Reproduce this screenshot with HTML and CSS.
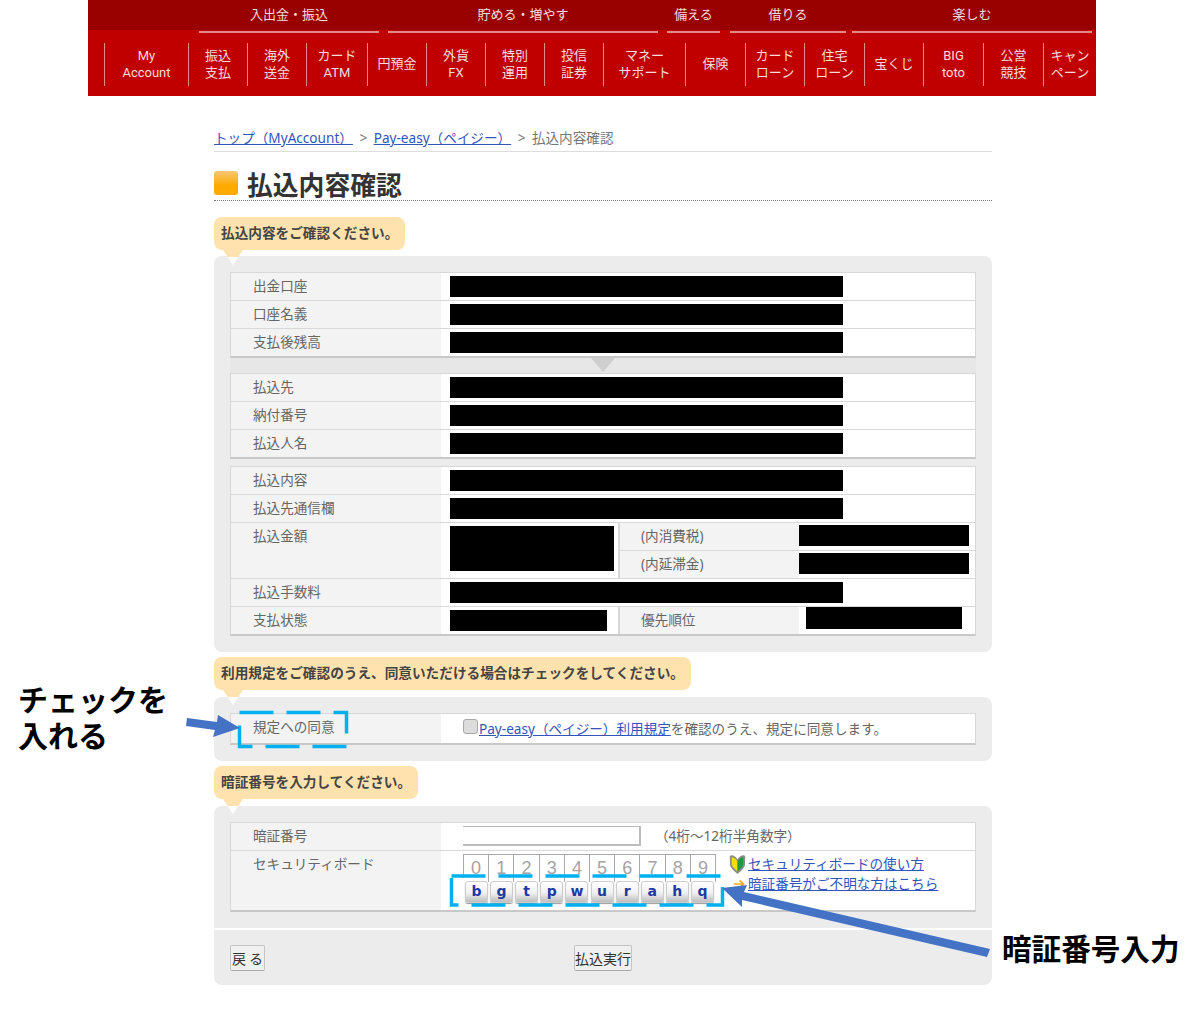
FILE: index.html
```html
<!DOCTYPE html>
<html lang="ja">
<head>
<meta charset="utf-8">
<title>払込内容確認</title>
<link rel="stylesheet" href="styles.css">
</head>
<body>
<header class="site-nav">
  <div class="nav-groups">
    <div class="group g-in">入出金・振込</div>
    <div class="group g-save">貯める・増やす</div>
    <div class="group g-prep">備える</div>
    <div class="group g-loan">借りる</div>
    <div class="group g-fun">楽しむ</div>
  </div>
  <nav class="nav-items">
    <a class="item">My<br>Account</a>
    <a class="item">振込<br>支払</a>
    <a class="item">海外<br>送金</a>
    <a class="item">カード<br>ATM</a>
    <a class="item">円預金</a>
    <a class="item">外貨<br>FX</a>
    <a class="item">特別<br>運用</a>
    <a class="item">投信<br>証券</a>
    <a class="item">マネー<br>サポート</a>
    <a class="item">保険</a>
    <a class="item">カード<br>ローン</a>
    <a class="item">住宅<br>ローン</a>
    <a class="item">宝くじ</a>
    <a class="item">BIG<br>toto</a>
    <a class="item">公営<br>競技</a>
    <a class="item">キャン<br>ペーン</a>
  </nav>
</header>

<main class="main">
  <div class="crumbs"><a class="link">トップ（MyAccount）</a><span class="sep">&gt;</span><a class="link">Pay-easy（ペイジー）</a><span class="sep">&gt;</span><span>払込内容確認</span></div>
  <h1 class="title"><span class="title-mark"></span>払込内容確認</h1>

  <p class="bubble bubble-first">払込内容をご確認ください。</p>
  <section class="panel">
    <div class="tbl">
      <div class="row"><div class="lbl">出金口座</div><div class="val"><i class="ink ink-wide"></i></div></div>
      <div class="row"><div class="lbl">口座名義</div><div class="val"><i class="ink ink-wide"></i></div></div>
      <div class="row row-last"><div class="lbl">支払後残高</div><div class="val"><i class="ink ink-wide"></i></div></div>
    </div>
    <div class="flow"><span class="flow-mark"></span></div>
    <div class="tbl">
      <div class="row"><div class="lbl">払込先</div><div class="val"><i class="ink ink-wide"></i></div></div>
      <div class="row"><div class="lbl">納付番号</div><div class="val"><i class="ink ink-wide"></i></div></div>
      <div class="row row-last"><div class="lbl">払込人名</div><div class="val"><i class="ink ink-wide"></i></div></div>
    </div>
    <div class="tbl tbl-spaced">
      <div class="row"><div class="lbl">払込内容</div><div class="val"><i class="ink ink-wide"></i></div></div>
      <div class="row"><div class="lbl">払込先通信欄</div><div class="val"><i class="ink ink-wide"></i></div></div>
      <div class="row row-split row-tall">
        <div class="lbl lbl-top">払込金額</div>
        <div class="val val-mid"><i class="ink ink-tall"></i></div>
        <div class="sub">
          <div class="sub-row"><div class="lbl lbl-sub">(内消費税)</div><div class="val val-side"><i class="ink ink-side"></i></div></div>
          <div class="sub-row sub-row-last"><div class="lbl lbl-sub">(内延滞金)</div><div class="val val-side"><i class="ink ink-side"></i></div></div>
        </div>
      </div>
      <div class="row"><div class="lbl">払込手数料</div><div class="val"><i class="ink ink-wide"></i></div></div>
      <div class="row row-split row-last">
        <div class="lbl">支払状態</div>
        <div class="val val-mid"><i class="ink ink-status"></i></div>
        <div class="sub-row sub-row-last sub-row-edge"><div class="lbl lbl-sub">優先順位</div><div class="val val-prio"><i class="ink ink-prio"></i></div></div>
      </div>
    </div>
  </section>

  <p class="bubble">利用規定をご確認のうえ、同意いただける場合はチェックをしてください。</p>
  <section class="panel">
    <div class="tbl">
      <div class="row row-last row-consent">
        <div class="lbl">規定への同意</div>
        <div class="val val-form"><input class="check" type="checkbox"><span class="consent"><a class="link">Pay-easy（ペイジー）利用規定</a>を確認のうえ、規定に同意します。</span></div>
      </div>
    </div>
  </section>

  <p class="bubble">暗証番号を入力してください。</p>
  <section class="panel panel-pin">
    <div class="tbl">
      <div class="row">
        <div class="lbl">暗証番号</div>
        <div class="val val-form"><input class="pin" type="text"><span class="hint">（4桁～12桁半角数字）</span></div>
      </div>
      <div class="row row-last row-board">
        <div class="lbl lbl-top">セキュリティボード</div>
        <div class="val val-board">
          <div class="board">
            <div class="digits"><span>0</span><span>1</span><span>2</span><span>3</span><span>4</span><span>5</span><span>6</span><span>7</span><span>8</span><span>9</span></div>
            <div class="keys"><span>b</span><span>g</span><span>t</span><span>p</span><span>w</span><span>u</span><span>r</span><span>a</span><span>h</span><span>q</span></div>
          </div>
          <div class="help">
            <div class="help-line">
              <svg class="help-icon" viewBox="0 0 17 20" aria-hidden="true"><path d="M8.5 5.5 C6 1.5 2.5 .5 .8 2 L1 11 C1.5 14 5 17 8.5 20 C12 17 15.5 14 16 11 L16.2 2 C14.5 .5 11 1.5 8.5 5.5Z" fill="#8c8c8c"/><path d="M8.5 7.5 C6.5 4 4 3 2.6 3.6 L2.8 10.6 C3.2 13 6 15.5 8.5 17.5Z" fill="#f4e000"/><path d="M8.5 7.5 C10.5 4 13 3 14.4 3.6 L14.2 10.6 C13.8 13 11 15.5 8.5 17.5Z" fill="#1f9a3c"/></svg>
              <a class="link">セキュリティボードの使い方</a>
            </div>
            <div class="help-line">
              <svg class="help-icon help-arrow" viewBox="0 0 17 12" aria-hidden="true"><path d="M2 6H14M9 1.5L14 6L9 10.5" fill="none" stroke="#f5a623" stroke-width="2"/></svg>
              <a class="link">暗証番号がご不明な方はこちら</a>
            </div>
          </div>
        </div>
      </div>
    </div>
    <div class="actions">
      <button class="btn btn-back" type="button">戻 る</button>
      <button class="btn" type="button">払込実行</button>
    </div>
  </section>
</main>

<div class="notes">
  <svg class="notes-art" viewBox="0 0 1200 1013" aria-hidden="true">
    <rect class="dash" x="239.5" y="712.5" width="107" height="34"/>
    <rect class="dash" x="451.5" y="876" width="271" height="29"/>
    <polygon class="arrow" points="187,718 217,722 218,715 240,728 213,737 215,730 186,726"/>
    <polygon class="arrow" points="722,888 747,885 744,892 990,949 987,957 742,900 742,907"/>
  </svg>
  <div class="note note-check">チェックを<br>入れる</div>
  <div class="note note-pin">暗証番号入力</div>
</div>
</body>
</html>
```

FILE: styles.css
```css
* { box-sizing: border-box; }
html, body { margin: 0; padding: 0; }
body {
  position: relative;
  height: 1013px;
  overflow: hidden;
  background: #fff;
  color: #666;
  font-family: "Noto Sans", "Noto Sans CJK JP", sans-serif;
  font-size: 13.6px;
  line-height: 20px;
}

/* navigation */
.site-nav {
  width: 1008px;
  height: 96px;
  margin-left: 88px;
  background: #c00000;
  color: #f6dcdc;
  font-family: Roboto, "Noto Sans CJK JP", sans-serif;
}
.nav-groups {
  display: flex;
  height: 33px;
  padding-left: 111px;
  background: linear-gradient(#990000 30px, #c00000 30px);
}
.group {
  height: 33px;
  border-bottom: 2px solid #e08a8a;
  text-align: center;
  font-size: 13px;
  line-height: 29px;
}
.g-in { width: 180px; margin-right: 9px; }
.g-save { width: 270px; margin-right: 9px; }
.g-prep { width: 53px; margin-right: 10px; }
.g-loan { width: 116px; margin-right: 6px; }
.g-fun { width: 240px; }
.nav-items {
  display: grid;
  grid-template-columns: 84px 59px 59px 61px 59px 59px 59px 59px 82px 60px 59px 60px 59px 60px 60px 53px;
  height: 43px;
  margin: 10px 0 0 16px;
}
.item {
  display: flex;
  align-items: center;
  justify-content: center;
  padding-bottom: 2px;
  border-left: 1px solid #e08a8a;
  text-align: center;
  font-size: 13px;
  line-height: 17px;
  white-space: nowrap;
}

/* page */
.main { width: 778px; margin-left: 214px; }
.crumbs {
  height: 56px;
  padding-top: 32px;
  border-bottom: 1px solid #ddd;
  color: #777;
}
.sep { margin: 0 6.5px; }
.link { color: #3355bb; text-decoration: underline; }
.title {
  display: flex;
  align-items: center;
  height: 49px;
  margin: 0;
  padding-top: 17px;
  border-bottom: 1px dotted #777;
  color: #333;
  font-size: 25.8px;
  line-height: 34px;
  font-weight: 700;
}
.title-mark {
  width: 24px;
  height: 24px;
  margin: 0 9px 4px 0;
  border-radius: 3px;
  background: linear-gradient(#f6c778, #ffaa00 60%);
}
.bubble {
  position: relative;
  width: fit-content;
  height: 33px;
  margin: 5px 0 7px;
  padding: 0 7px;
  border-radius: 8px;
  background: #ffe2ad;
  color: #444;
  font-size: 13.65px;
  font-weight: 700;
  line-height: 32px;
}
.bubble-first { margin: 16px 0 6px; }
.bubble::after {
  content: "";
  position: absolute;
  left: 9px;
  top: 33px;
  width: 20px;
  height: 15px;
  background: linear-gradient(#ffe2ad 7px, #fff 7px);
  clip-path: polygon(0 0, 100% 0, 50% 100%);
  z-index: 1;
}
.panel {
  padding: 16px;
  border-radius: 8px;
  background: #ececec;
}
.panel-pin { padding-bottom: 0; }

/* tables */
.tbl {
  border-top: 1px solid #d8d8d8;
  border-left: 1px solid #d8d8d8;
  border-right: 1px solid #d8d8d8;
  border-bottom: 2px solid #c8c8c8;
  background: #fff;
}
.tbl-spaced { margin-top: 7px; }
.flow {
  display: flex;
  justify-content: center;
  height: 15px;
  background: #e7e7e7;
}
.flow-mark {
  width: 24px;
  height: 14px;
  background: #cfcfcf;
  clip-path: polygon(0 0, 100% 0, 50% 100%);
}
.row {
  display: grid;
  grid-template-columns: 210px 1fr;
  height: 28px;
  border-bottom: 1px solid #d8d8d8;
}
.row-last { height: 27px; border-bottom: 0; }
.row-tall { height: 56px; }
.row-split { grid-template-columns: 210px 177px 1fr; }
.row-consent { height: 29px; }
.row-consent .lbl { padding-bottom: 4px; }
.row-board { height: 59px; }
.lbl {
  display: flex;
  align-items: center;
  padding: 0 0 2px 22px;
  background: #f3f3f3;
}
.lbl-top { align-items: flex-start; padding-top: 3px; }
.val {
  display: flex;
  align-items: center;
  padding-left: 9px;
  min-width: 0;
}
.ink { display: block; background: #000; height: 21px; }
.ink-wide { width: 393px; }
.ink-tall { width: 164px; height: 45px; margin-bottom: 4px; }
.ink-side { width: 170px; margin-bottom: 2px; }
.ink-status { width: 157px; }
.ink-prio { width: 156px; height: 22px; }
.sub { display: flex; flex-direction: column; }
.sub-row {
  display: grid;
  grid-template-columns: 179px 1fr;
  flex: 1;
  border-left: 2px solid #d8d8d8;
  border-bottom: 1px solid #d8d8d8;
}
.sub-row-last { border-bottom: 0; }
.sub-row-edge { height: 27px; }
.lbl-sub { padding-left: 21px; }
.val-side { padding-left: 0; }
.val-prio { padding-left: 7px; align-items: flex-start; }

/* form */
.val-form { padding-left: 22px; }
.check {
  appearance: none;
  width: 15px;
  height: 15px;
  margin: 0 1px 4px 0;
  border: 1px solid #a8a8a8;
  border-radius: 3px;
  background: #dcdcdc;
}
.consent { padding-top: 0; }
.pin {
  width: 178px;
  height: 20px;
  margin-top: -1px;
  padding: 0;
  border: 0;
  border-top: 1px solid #bbb;
  border-right: 2px solid #bbb;
  border-bottom: 2px solid #bbb;
  background: #fff;
}
.hint { margin-left: 14px; margin-bottom: 2px; }

/* security board */
.val-board { align-items: flex-start; padding: 3px 0 0 22px; }
.board { width: 253px; }
.digits, .keys { display: grid; grid-template-columns: repeat(10, 1fr); }
.digits { height: 24px; border-top: 1px solid #aaa; border-left: 1px solid #aaa; }
.digits span {
  border-right: 1px solid #aaa;
  color: #a4a4a4;
  font-family: "Liberation Sans", sans-serif;
  font-size: 18px;
  line-height: 27px;
  text-align: center;
}
.keys { margin-top: 3px; padding-left: 2px; }
.keys span {
  width: 23px;
  height: 22px;
  border: 1px solid #ccc;
  border-radius: 3px;
  background: linear-gradient(#fff, #f0f0f0 55%, #bdbdbd);
  box-shadow: 0 1px 1px #999;
  color: #1b3aa6;
  font-family: "DejaVu Sans", sans-serif;
  font-size: 14px;
  font-weight: 700;
  line-height: 19px;
  text-align: center;
}
.help { margin-left: 13px; }
.help-line { display: flex; align-items: center; height: 20px; }
.help-icon { width: 17px; height: 20px; margin-right: 2px; flex: none; }
.help-arrow { width: 14px; height: 12px; margin: 0 2px 0 3px; }

/* actions */
.actions {
  display: grid;
  grid-template-columns: 1fr auto 1fr;
  height: 57px;
  margin: 16px -16px 0;
  padding: 15px 16px 0;
  border-top: 2px solid #fff;
  align-items: start;
}
.btn {
  height: 26px;
  padding: 0;
  border: 1px solid #c4c4c4;
  border-bottom-color: #aaa;
  border-radius: 2px;
  background: #f0f0f0;
  color: #333;
  font-family: "Noto Sans CJK JP", sans-serif;
  font-size: 14px;
  line-height: 24px;
  width: 58px;
  white-space: nowrap;
}
.btn-back { justify-self: start; width: 35px; }

/* annotations lying over the page */
.notes {
  position: absolute;
  left: 0;
  top: 0;
  width: 1200px;
  height: 1013px;
  pointer-events: none;
}
.notes-art { display: block; width: 1200px; height: 1013px; }
.dash {
  fill: none;
  stroke: #00b0f0;
  stroke-width: 3.5;
  stroke-dasharray: 34 13;
}
.arrow { fill: #4472c4; }
.note {
  position: absolute;
  color: #000;
  font-family: "Noto Sans CJK JP", sans-serif;
  font-size: 29.6px;
  font-weight: 700;
  line-height: 36px;
  white-space: nowrap;
}
.note-check { left: 18px; top: 680px; font-size: 30px; }
.note-pin { left: 1002px; top: 930px; }
```
